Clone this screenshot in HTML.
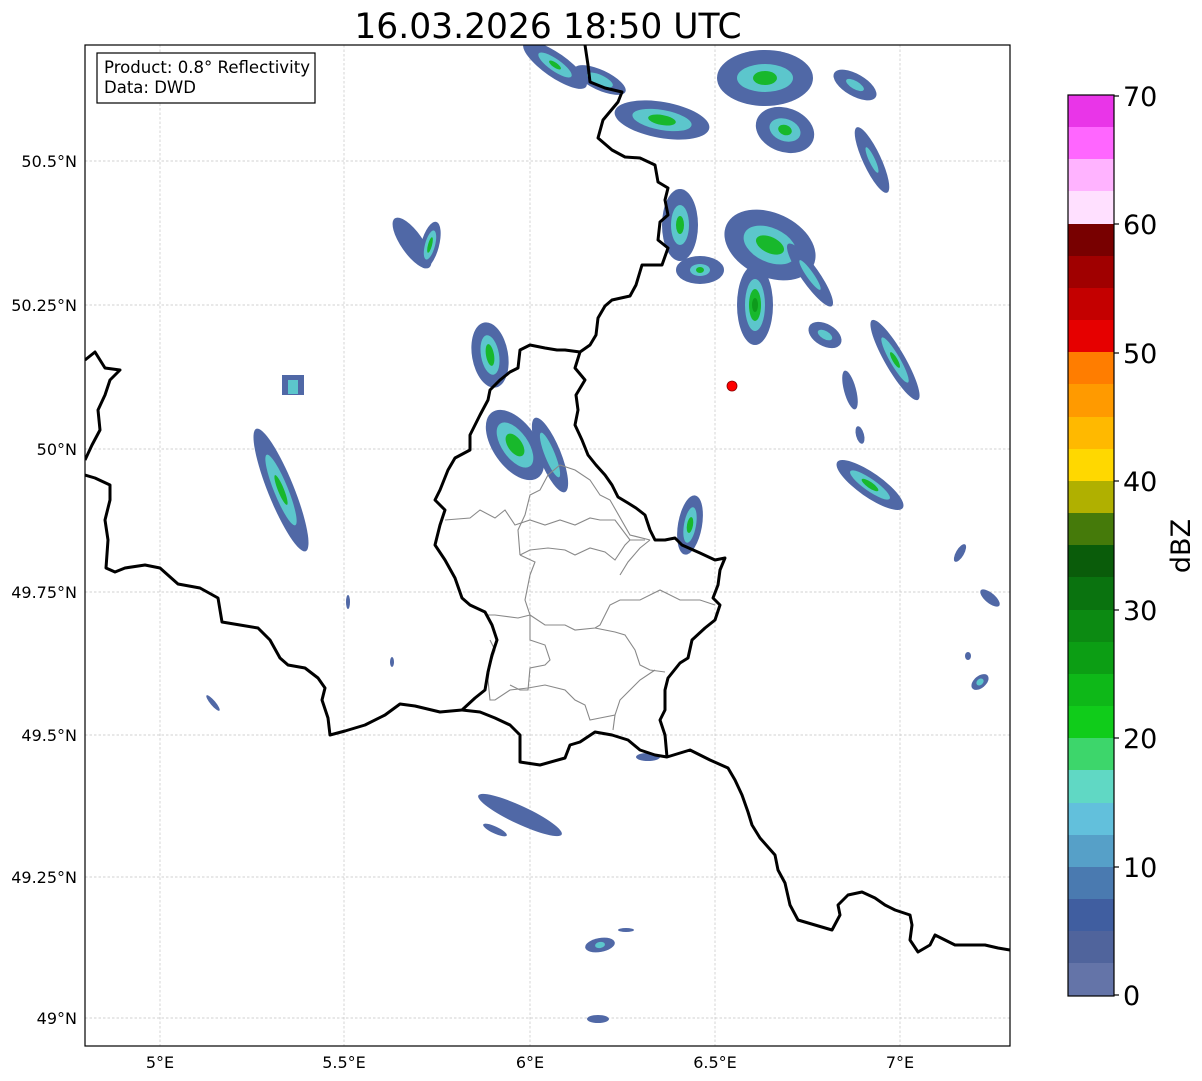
<!DOCTYPE html>
<html><head><meta charset="utf-8"><style>
html,body{margin:0;padding:0;background:#fff;width:1202px;height:1081px;overflow:hidden}
svg{display:block;font-family:"DejaVu Sans","Liberation Sans",sans-serif}
.b{fill:#5068a6}.t{fill:#5cc6cc}.g{fill:#18b82c}.d{fill:#0e9a1c}
.grid{stroke:#c4c4c4;stroke-width:0.7;stroke-dasharray:2.5,2}
.bd{fill:none;stroke:#000;stroke-width:3;stroke-linejoin:round}
.dist{fill:none;stroke:#888;stroke-width:1.1}
</style></head><body>
<svg width="1202" height="1081" viewBox="0 0 1202 1081">
<text x="548" y="38" font-size="34.5" text-anchor="middle">16.03.2026 18:50 UTC</text>
<defs><clipPath id="ax"><rect x="85" y="45" width="925" height="1001"/></clipPath></defs>
<g clip-path="url(#ax)">
<g class="grid">
<line x1="160" y1="45" x2="160" y2="1046"/><line x1="344" y1="45" x2="344" y2="1046"/><line x1="530" y1="45" x2="530" y2="1046"/><line x1="715" y1="45" x2="715" y2="1046"/><line x1="900" y1="45" x2="900" y2="1046"/>
<line x1="85" y1="161" x2="1010" y2="161"/><line x1="85" y1="305" x2="1010" y2="305"/><line x1="85" y1="449" x2="1010" y2="449"/><line x1="85" y1="592" x2="1010" y2="592"/><line x1="85" y1="735" x2="1010" y2="735"/><line x1="85" y1="877" x2="1010" y2="877"/><line x1="85" y1="1018" x2="1010" y2="1018"/>
</g>
<g transform="translate(555,65) rotate(35)"><ellipse class="b" rx="38" ry="12"/><ellipse class="t" rx="20" ry="6"/><ellipse class="g" rx="7" ry="2.5"/></g>
<g transform="translate(600,80) rotate(25)"><ellipse class="b" rx="28" ry="10"/><ellipse class="t" rx="14" ry="5"/></g>
<g transform="translate(662,120) rotate(10)"><ellipse class="b" rx="48" ry="18"/><ellipse class="t" rx="30" ry="10"/><ellipse class="g" rx="14" ry="5"/></g>
<g transform="translate(765,78) rotate(0)"><ellipse class="b" rx="48" ry="28"/><ellipse class="t" rx="28" ry="14"/><ellipse class="g" rx="12" ry="7"/></g>
<g transform="translate(785,130) rotate(20)"><ellipse class="b" rx="30" ry="22"/><ellipse class="t" rx="16" ry="11"/><ellipse class="g" rx="7" ry="5"/></g>
<g transform="translate(855,85) rotate(30)"><ellipse class="b" rx="24" ry="11"/><ellipse class="t" rx="10" ry="4"/></g>
<g transform="translate(872,160) rotate(65)"><ellipse class="b" rx="36" ry="9"/><ellipse class="t" rx="14" ry="3"/></g>
<g transform="translate(680,225) rotate(0)"><ellipse class="b" rx="18" ry="36"/><ellipse class="t" rx="9" ry="20"/><ellipse class="g" rx="4" ry="9"/></g>
<g transform="translate(700,270)"><ellipse class="b" rx="24" ry="14"/><ellipse class="t" rx="10" ry="6"/><ellipse class="g" rx="4" ry="3"/></g>
<g transform="translate(770,245) rotate(25)"><ellipse class="b" rx="48" ry="32"/><ellipse class="t" rx="28" ry="17"/><ellipse class="g" rx="15" ry="8"/></g>
<g transform="translate(755,305)"><ellipse class="b" rx="18" ry="40"/><ellipse class="t" rx="10" ry="26"/><ellipse class="g" rx="6" ry="16"/><ellipse class="d" rx="3" ry="7"/></g>
<g transform="translate(810,275) rotate(55)"><ellipse class="b" rx="38" ry="9"/><ellipse class="t" rx="18" ry="3.5"/></g>
<g transform="translate(825,335) rotate(30)"><ellipse class="b" rx="18" ry="11"/><ellipse class="t" rx="8" ry="4"/></g>
<g transform="translate(895,360) rotate(60)"><ellipse class="b" rx="46" ry="10"/><ellipse class="t" rx="26" ry="5"/><ellipse class="g" rx="9" ry="2.5"/></g>
<g transform="translate(850,390) rotate(75)"><ellipse class="b" rx="20" ry="6"/></g>
<g transform="translate(860,435) rotate(75)"><ellipse class="b" rx="9" ry="4"/></g>
<g transform="translate(870,485) rotate(35)"><ellipse class="b" rx="40" ry="12"/><ellipse class="t" rx="24" ry="6"/><ellipse class="g" rx="10" ry="3"/></g>
<g transform="translate(412,243) rotate(55)"><ellipse class="b" rx="30" ry="11"/></g>
<g transform="translate(430,245) rotate(15)"><ellipse class="b" rx="9" ry="24"/><ellipse class="t" rx="5" ry="15"/><ellipse class="g" rx="2" ry="8"/></g>
<g transform="translate(490,355) rotate(-10)"><ellipse class="b" rx="18" ry="33"/><ellipse class="t" rx="9" ry="20"/><ellipse class="g" rx="4" ry="11"/></g>
<g transform="translate(515,445) rotate(55)"><ellipse class="b" rx="40" ry="22"/><ellipse class="t" rx="26" ry="13"/><ellipse class="g" rx="13" ry="7"/></g>
<g transform="translate(550,455) rotate(-22)"><ellipse class="b" rx="11" ry="40"/><ellipse class="t" rx="5" ry="24"/></g>
<g transform="translate(690,525) rotate(10)"><ellipse class="b" rx="12" ry="30"/><ellipse class="t" rx="6" ry="18"/><ellipse class="g" rx="3" ry="8"/></g>
<g transform="translate(281,490) rotate(-22)"><ellipse class="b" rx="13" ry="66"/><ellipse class="t" rx="7" ry="38"/><ellipse class="g" rx="3" ry="16"/></g>
<g transform="translate(293,388)"><rect class="b" x="-11" y="-13" width="22" height="20"/><rect class="t" x="-5" y="-8" width="10" height="14"/></g>
<g transform="translate(520,815) rotate(25)"><ellipse class="b" rx="46" ry="9"/></g>
<g transform="translate(495,830) rotate(25)"><ellipse class="b" rx="13" ry="3.5"/></g>
<g transform="translate(600,945) rotate(-10)"><ellipse class="b" rx="15" ry="7"/><ellipse class="t" rx="5" ry="3"/></g>
<ellipse class="b" cx="626" cy="930" rx="8" ry="2"/>
<ellipse class="b" cx="598" cy="1019" rx="11" ry="4"/>
<g transform="translate(980,682) rotate(-40)"><ellipse class="b" rx="10" ry="6"/><ellipse class="t" rx="4" ry="3"/></g>
<g transform="translate(990,598) rotate(40)"><ellipse class="b" rx="12" ry="5"/></g>
<g transform="translate(960,553) rotate(-60)"><ellipse class="b" rx="10" ry="4"/></g>
<g transform="translate(213,703) rotate(50)"><ellipse class="b" rx="10" ry="2.5"/></g>
<ellipse class="b" cx="648" cy="757" rx="12" ry="4"/>
<ellipse class="b" cx="348" cy="602" rx="2" ry="7"/>
<ellipse class="b" cx="392" cy="662" rx="2" ry="5"/>
<ellipse class="b" cx="968" cy="656" rx="3" ry="4"/>
<g class="dist">
<polyline points="445,520 470,518 480,510 495,518 505,510 515,525 530,520 545,525 560,520 575,525 590,518 600,520 615,520 630,540"/>
<polyline points="520,555 518,530 525,515 530,495 540,490 548,475 560,465 575,470 590,480 600,495 610,500 630,535 650,540"/>
<polyline points="520,555 530,550 548,548 565,550 575,555 590,548 605,552 615,560 625,545 630,540 645,540"/>
<polyline points="520,555 535,562 530,575 525,600 530,615 518,618 495,615 485,615"/>
<polyline points="620,575 628,562 640,548 650,540"/>
<polyline points="530,615 545,625 565,625 575,630 595,628 600,625 610,605 620,600 640,600 660,590 680,600 700,600 715,605"/>
<polyline points="595,628 615,632 625,635 635,650 640,665 650,670 665,672"/>
<polyline points="530,615 530,640 545,645 550,660 545,665 530,668 528,690 520,690 510,685"/>
<polyline points="490,640 495,650 490,665 488,680 490,700 495,700 510,690 528,688 545,685 565,690 575,700 585,705 590,720 600,718 615,715 620,700 630,690 640,680 655,670"/>
<polyline points="615,715 613,730"/>
</g>
<g class="bd">
<polyline points="585,45 588,65 590,82 605,88 622,92 618,102 603,120 598,138 612,150 625,157 640,158 655,165 658,182 668,188 665,200 668,215 660,222 658,240 668,248 662,265 642,265 636,285 630,296 612,300 605,306 598,318 596,335 590,345 580,352 575,368 585,380 576,395 578,410 575,425 582,440 588,455 596,465 605,475 612,485 618,497 628,503 636,508 645,515 650,530 655,540 665,540 675,538 682,545 700,553 715,560 725,558 720,570 718,585 713,598 720,605 715,620 705,628 692,640 688,658 680,663 668,678 665,690 665,710 660,720 665,735 667,757"/>
<polyline points="580,352 565,350 557,350 545,348 530,345 520,350 518,368 510,372 500,380 490,390 488,400 480,415 475,425 470,435 470,450 455,458 448,470 440,490 435,500 445,510 440,525 435,545 445,560 455,578 462,598 470,605 485,612 492,625 497,640 492,655 488,672 485,690 475,698 462,710 440,712 415,706 400,704 385,715 365,725 345,731 330,735 328,718 322,700 325,688 318,678 305,668 288,665 280,658 270,640 258,628 240,625 222,622 218,598 200,588 178,584 160,568 145,565 125,568 115,572 106,568 108,540 105,520 110,500 110,485 95,478 85,475"/>
<polyline points="462,710 480,712 495,718 510,725 520,735 520,762 540,765 565,758 570,745 580,742 595,732 612,735 628,740 640,750 655,755 667,757 690,750 710,760 728,768 735,780 742,795 748,812 752,825 760,838 775,855 778,870 785,883 790,905 798,920 815,925 832,930 840,915 838,905 848,895 862,892 875,898 885,905 895,910 910,915 912,925 910,940 918,952 930,945 935,935 945,940 955,945 968,945 985,945 998,948 1010,950"/>
<polyline points="85,360 95,352 105,368 120,370 110,380 105,395 98,410 100,430 92,445 85,460"/>
</g>
<circle cx="732" cy="386" r="5" fill="#f00" stroke="#800" stroke-width="0.8"/>
</g>
<rect x="85" y="45" width="925" height="1001" fill="none" stroke="#000" stroke-width="1.2"/>
<rect x="97" y="53" width="218" height="50" fill="#fff" stroke="#000" stroke-width="1.2"/>
<text x="104" y="73" font-size="16.5" textLength="206" lengthAdjust="spacingAndGlyphs">Product: 0.8° Reflectivity</text>
<text x="104" y="93" font-size="16.5">Data: DWD</text>
<g font-size="16" text-anchor="end">
<text x="77" y="167">50.5°N</text><text x="77" y="311">50.25°N</text><text x="77" y="455">50°N</text><text x="77" y="598">49.75°N</text><text x="77" y="741">49.5°N</text><text x="77" y="883">49.25°N</text><text x="77" y="1024">49°N</text>
</g>
<g font-size="16" text-anchor="middle">
<text x="160" y="1068">5°E</text><text x="344" y="1068">5.5°E</text><text x="530" y="1068">6°E</text><text x="715" y="1068">6.5°E</text><text x="900" y="1068">7°E</text>
</g>
<g>
<rect x="1068" y="95" width="46" height="33" fill="#e935e8"/>
<rect x="1068" y="127" width="46" height="33" fill="#ff66ff"/>
<rect x="1068" y="159" width="46" height="33" fill="#ffb3ff"/>
<rect x="1068" y="191" width="46" height="33" fill="#ffe0ff"/>
<rect x="1068" y="224" width="46" height="33" fill="#780000"/>
<rect x="1068" y="256" width="46" height="33" fill="#a00000"/>
<rect x="1068" y="288" width="46" height="33" fill="#c40000"/>
<rect x="1068" y="320" width="46" height="33" fill="#e60000"/>
<rect x="1068" y="352" width="46" height="33" fill="#ff7d00"/>
<rect x="1068" y="384" width="46" height="33" fill="#ff9a00"/>
<rect x="1068" y="417" width="46" height="33" fill="#ffb900"/>
<rect x="1068" y="449" width="46" height="33" fill="#ffd800"/>
<rect x="1068" y="481" width="46" height="33" fill="#b0b000"/>
<rect x="1068" y="513" width="46" height="33" fill="#457a0a"/>
<rect x="1068" y="545" width="46" height="33" fill="#0a5c0a"/>
<rect x="1068" y="577" width="46" height="33" fill="#0a730f"/>
<rect x="1068" y="610" width="46" height="33" fill="#0c8a12"/>
<rect x="1068" y="642" width="46" height="33" fill="#0c9e14"/>
<rect x="1068" y="674" width="46" height="33" fill="#0eb818"/>
<rect x="1068" y="706" width="46" height="33" fill="#10cc1a"/>
<rect x="1068" y="738" width="46" height="33" fill="#3dd66b"/>
<rect x="1068" y="770" width="46" height="33" fill="#60d8c4"/>
<rect x="1068" y="803" width="46" height="33" fill="#62c0dc"/>
<rect x="1068" y="835" width="46" height="33" fill="#56a0c8"/>
<rect x="1068" y="867" width="46" height="33" fill="#4a7ab0"/>
<rect x="1068" y="899" width="46" height="33" fill="#405ea0"/>
<rect x="1068" y="931" width="46" height="33" fill="#50649c"/>
<rect x="1068" y="963" width="46" height="33" fill="#6474a8"/>
<rect x="1068" y="95" width="46" height="901" fill="none" stroke="#000" stroke-width="1.2"/>
<g stroke="#000" stroke-width="1.2">
<line x1="1114" y1="96" x2="1119" y2="96"/><line x1="1114" y1="224" x2="1119" y2="224"/><line x1="1114" y1="353" x2="1119" y2="353"/><line x1="1114" y1="481" x2="1119" y2="481"/><line x1="1114" y1="610" x2="1119" y2="610"/><line x1="1114" y1="738" x2="1119" y2="738"/><line x1="1114" y1="867" x2="1119" y2="867"/><line x1="1114" y1="995" x2="1119" y2="995"/>
</g>
<g font-size="27">
<text x="1123" y="106">70</text><text x="1123" y="234">60</text><text x="1123" y="363">50</text><text x="1123" y="491">40</text><text x="1123" y="620">30</text><text x="1123" y="748">20</text><text x="1123" y="877">10</text><text x="1123" y="1005">0</text>
</g>
<text transform="translate(1190,546) rotate(-90)" font-size="27" text-anchor="middle">dBZ</text>
</g>
</svg>
</body></html>
